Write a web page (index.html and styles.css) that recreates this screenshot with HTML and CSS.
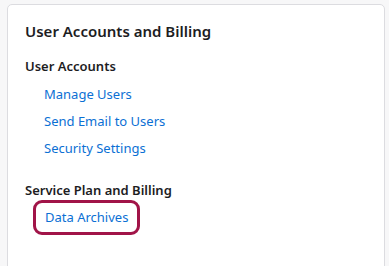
FILE: index.html
```html
<!DOCTYPE html>
<html lang="en">
<head>
    <meta charset="UTF-8">
    <meta name="viewport" content="width=device-width, initial-scale=1.0">
    <title>User Accounts and Billing</title>
    <link rel="stylesheet" href="styles.css">
</head>
<body>
    <div class="card">
        <h2 class="card-title">User Accounts and Billing</h2>

        <div class="section">
            <h3 class="section-title">User Accounts</h3>
            <ul class="links">
                <li><a href="#">Manage Users</a></li>
                <li><a href="#">Send Email to Users</a></li>
                <li><a href="#">Security Settings</a></li>
            </ul>
        </div>

        <div class="section">
            <h3 class="section-title">Service Plan and Billing</h3>
            <ul class="links">
                <li class="highlight"><a href="#">Data Archives</a></li>
            </ul>
        </div>
    </div>
</body>
</html>
```

FILE: styles.css
```css
html, body {
    height: 266px;
    overflow: hidden;
}

body {
    font-family: 'Noto Sans', 'Open Sans', sans-serif;
    background-color: #f7f7f8;
    margin: 0;
    padding: 4px 4px 0 7px;
    box-sizing: border-box;
}

.card {
    background-color: #fff;
    border: 1px solid #dcdce0;
    border-radius: 5px;
    padding: 15px 17px 0;
    height: 300px;
    box-sizing: border-box;
}

.card-title {
    margin: 0 0 15px;
    font-size: 15px;
    font-weight: 600;
    color: #1d1d1f;
    line-height: 22px;
}

.section {
    margin-bottom: 19px;
}

.section-title {
    margin: 0 0 6px;
    font-size: 13px;
    font-weight: 600;
    color: #1d1d1f;
    line-height: 18px;
}

.links {
    list-style: none;
    margin: 0;
    padding: 0 0 0 19px;
}

.links li {
    font-size: 13px;
    line-height: 27px;
}

.links a {
    color: #0b70d4;
    text-decoration: none;
}

.highlight {
    display: inline-block;
    margin: -5px 0 0 -11px;
    padding: 1px 9px;
    border: 3.5px solid #a11448;
    border-radius: 9px;
}
```
